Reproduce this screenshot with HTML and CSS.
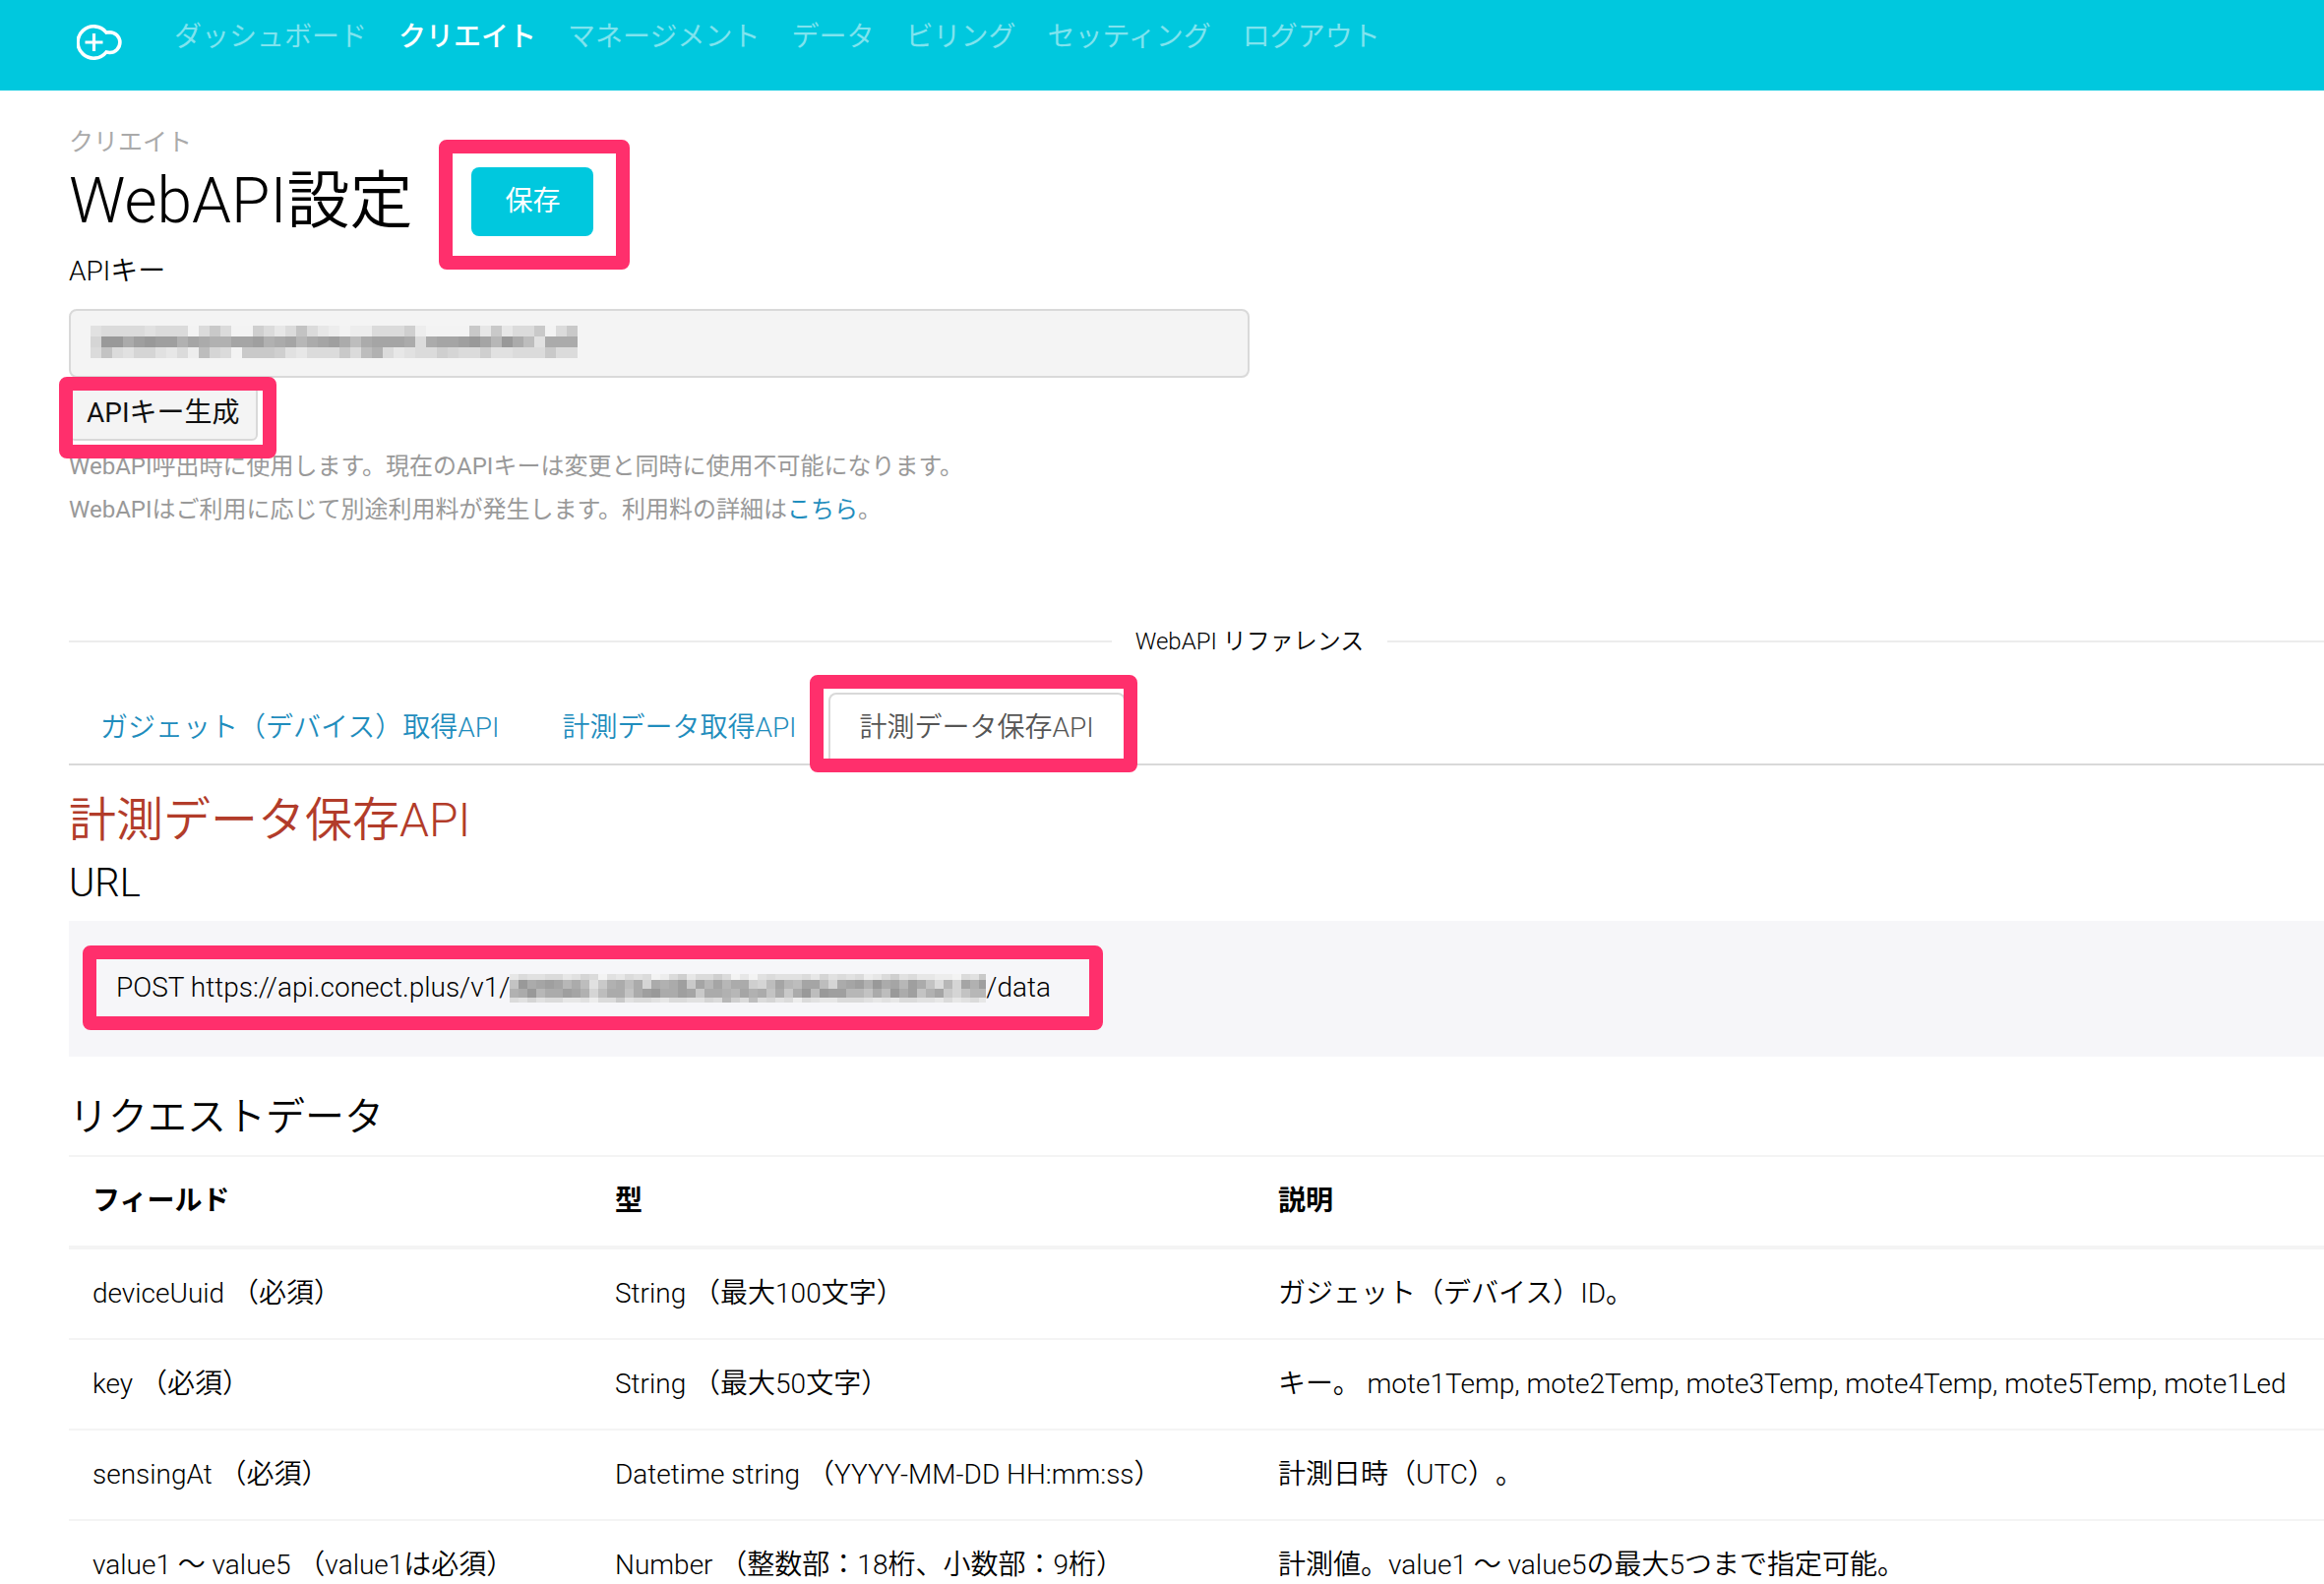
FILE: index.html
```html
<!DOCTYPE html>
<html lang="ja">
<head>
<meta charset="utf-8">
<meta name="viewport" content="width=device-width, initial-scale=1">
<title>WebAPI設定</title>
<link rel="stylesheet" href="styles.css">
</head>
<body>
<header class="topbar">
  <a class="logo" href="#" aria-label="ホーム">
    <svg width="48" height="40" viewBox="2 0 48 40" fill="none" stroke="#fff" stroke-width="3.6">
      <path d="M32 10A16.200 16.200 0 1 0 32 30L35.500 30.500A10.400 10.400 0 0 0 35.500 9.700Z"/>
      <path d="M10.500 20H28.500M19.500 11V29" stroke-width="3.200"/>
    </svg>
  </a>
  <nav class="nav">
    <a href="#">ダッシュボード</a>
    <a class="active" href="#">クリエイト</a>
    <a href="#">マネージメント</a>
    <a href="#">データ</a>
    <a href="#">ビリング</a>
    <a href="#">セッティング</a>
    <a href="#">ログアウト</a>
  </nav>
</header>

<main class="content">
  <p class="breadcrumb">クリエイト</p>
  <div class="title-row">
    <h1>WebAPI設定</h1>
    <span class="marked">
      <button class="save" type="button">保存</button>
      <span class="mark mark-save"></span>
    </span>
  </div>

  <label class="field-label" for="api-key">APIキー</label>
  <div class="key-field">
    <input id="api-key" type="text" readonly>
    <svg class="mosaic mosaic-key" width="495" height="33" data-cell="11" data-rows="11,11,11" data-levels="cbbbbcbbbfb8bff9bdb7bdefeebbb9effff8d8dbb8fb8f a00310114234422143253213632223b3221025036c3332f b7bcaacdbe6abf8889cdbbb8b64bdcbb9abb9ccbbb8bbf"></svg>
  </div>
  <span class="marked">
    <button class="generate" type="button">APIキー生成</button>
    <span class="mark mark-generate"></span>
  </span>
  <div class="help">
    <p>WebAPI呼出時に使用します。現在のAPIキーは変更と同時に使用不可能になります。</p>
    <p>WebAPIはご利用に応じて別途利用料が発生します。利用料の詳細は<a href="#">こちら</a>。</p>
  </div>

  <div class="divider"><span>WebAPI リファレンス</span></div>

  <div class="tabs">
    <a class="tab" href="#">ガジェット（デバイス）取得API</a>
    <a class="tab" href="#">計測データ取得API</a>
    <span class="marked">
      <a class="tab selected" href="#">計測データ保存API</a>
      <span class="mark mark-tab"></span>
    </span>
  </div>

  <h2>計測データ保存API</h2>
  <h3 class="url-title">URL</h3>
  <div class="endpoint">
    <span class="marked">
      <span class="url">POST https://api.conect.plus/v1/<svg class="mosaic" width="484" height="29" data-cell="9" data-rows="6,9,9,5" data-levels="dbccbbdcabfcdbcbfeb9dbb9bfdfcbcccbdacbcbedb9cbddeefbc8 703212536c84363a343182525339a6256226a32140325137b5a241 430533124a6337310331283345243738306011557360317428a7556 bcacbbddcebb8cbbcdbbccab59b6bacbebcddbbbcdcdbbccdbdcbd"></svg>/data</span>
      <span class="mark mark-url"></span>
    </span>
  </div>

  <h3>リクエストデータ</h3>
  <table class="fields">
    <colgroup><col class="col-field"><col class="col-type"><col></colgroup>
    <thead>
      <tr><th>フィールド</th><th>型</th><th>説明</th></tr>
    </thead>
    <tbody>
      <tr><td>deviceUuid （必須）</td><td>String （最大100文字）</td><td>ガジェット（デバイス）ID。</td></tr>
      <tr><td>key （必須）</td><td>String （最大50文字）</td><td>キー。 mote1Temp, mote2Temp, mote3Temp, mote4Temp, mote5Temp, mote1Led</td></tr>
      <tr><td>sensingAt （必須）</td><td>Datetime string （YYYY-MM-DD HH:mm:ss）</td><td>計測日時（UTC）。</td></tr>
      <tr><td>value1 〜 value5 （value1は必須）</td><td>Number （整数部：18桁、小数部：9桁）</td><td>計測値。value1 〜 value5の最大5つまで指定可能。</td></tr>
    </tbody>
  </table>
</main>
<script src="mosaic.js"></script>
</body>
</html>
```
FILE: styles.css
```css
*, *::before, *::after { box-sizing: border-box; }

body {
  margin: 0;
  height: 100vh;
  overflow: hidden;
  background: #fff;
  color: #000;
  font: 350 28px/40px Roboto, "Noto Sans CJK JP", sans-serif;
  text-spacing-trim: space-all;
}

h1, h2, h3, p { margin: 0; font-weight: 350; }
a { color: #1f8dbd; text-decoration: none; }
button, input { font: inherit; }

.topbar {
  display: flex;
  height: 92px;
  padding: 18px 78px;
  background: #00c8de;
}
.logo { display: flex; width: 99px; padding-top: 5px; }
.nav { display: flex; gap: 32px; }
.nav a { color: #7fe3ee; white-space: nowrap; font-weight: 400; }
.nav .active { color: #fff; font-weight: 500; }

/* The content column runs past the right edge of the window. */
.content { margin-right: -108px; padding: 32px 0 0 70px; }

.breadcrumb { color: #aaa; font-size: 25px; line-height: 42px; font-weight: 400; }
.title-row { display: flex; align-items: center; gap: 60px; height: 78px; }
h1 { font-size: 64px; line-height: 78px; }

.marked { display: inline-block; position: relative; vertical-align: top; }
.mark {
  position: absolute;
  border: 14px solid #ff2f6c;
  border-radius: 8px;
  pointer-events: none;
}
.mark-save { inset: -28px -37px -34px -33px; }
.mark-generate { inset: -9px -19px -18px -10px; }
.mark-tab { inset: -18px -12px -9px -19px; }
.mark-url { inset: -23px -53px -23px -34px; }

.save {
  display: block;
  height: 70px;
  padding: 0 34px;
  border: 0;
  border-radius: 8px;
  background: #00c8de;
  color: #fff;
  font-weight: 400;
}

.field-label { display: block; margin: 12px 0 18px; }
.key-field { position: relative; width: 50%; margin-bottom: 8px; }
.key-field input {
  display: block;
  width: 100%;
  height: 70px;
  padding: 0 22px;
  border: 2px solid #d9d9d9;
  border-radius: 8px;
  background: #f4f4f4;
}
.mosaic-key { position: absolute; left: 22px; top: 17px; }

.generate {
  display: block;
  height: 56px;
  padding: 0 16px;
  border: 2px solid #d9d9d9;
  border-radius: 6px;
  background: #f4f4f4;
  color: #111;
  font-weight: 400;
}

.help { margin-top: 4px; color: #999; font-size: 24px; line-height: 44px; }
.help p { font-weight: 400; }

.divider {
  display: flex;
  align-items: center;
  gap: 24px;
  margin: 92px 0 32px;
  font-size: 24px;
}
.divider::before, .divider::after {
  content: "";
  flex: 1;
  height: 2px;
  background: #ececec;
}

.tabs { display: flex; height: 74px; border-bottom: 2px solid #d9d9d9; }
.tab {
  display: block;
  height: 72px;
  padding: 14px 30px;
  border: 2px solid transparent;
  border-bottom: 0;
  white-space: nowrap;
}
.selected {
  border-color: #d9d9d9;
  border-radius: 8px 8px 0 0;
  color: #555;
}

h2 { margin-top: 26px; color: #b23c2a; font-size: 48px; line-height: 60px; }
h3 { margin: 42px 0 18px; font-size: 40px; line-height: 40px; }
.url-title { margin-top: 14px; }

.endpoint { padding: 48px 48px 50px; background: #f6f6f9; }
.url { display: flex; align-items: center; white-space: nowrap; }

.fields {
  width: 100%;
  border-collapse: collapse;
  table-layout: fixed;
  text-align: left;
}
.col-field { width: 531px; }
.col-type { width: 674px; }
.fields th, .fields td { padding: 25px 24px; border-top: 2px solid #f4f4f4; white-space: nowrap; }
.fields th { font-weight: 700; border-bottom: 4px solid #f4f4f4; }
```
FILE: mosaic.js
```js
// Fills each masked key with grey cells, one hex digit per cell.
document.querySelectorAll(".mosaic").forEach(function (svg) {
  var cell = Number(svg.dataset.cell);
  var heights = svg.dataset.rows.split(",").map(Number);
  var y = 0;
  svg.dataset.levels.split(" ").forEach(function (row, r) {
    row.split("").forEach(function (digit, c) {
      var level = 153 + parseInt(digit, 16) * 6;
      var rect = document.createElementNS("http://www.w3.org/2000/svg", "rect");
      rect.setAttribute("x", c * cell);
      rect.setAttribute("y", y);
      rect.setAttribute("width", cell);
      rect.setAttribute("height", heights[r]);
      rect.setAttribute("fill", "rgb(" + level + "," + level + "," + level + ")");
      rect.setAttribute("shape-rendering", "crispEdges");
      svg.appendChild(rect);
    });
    y += heights[r];
  });
});
```
